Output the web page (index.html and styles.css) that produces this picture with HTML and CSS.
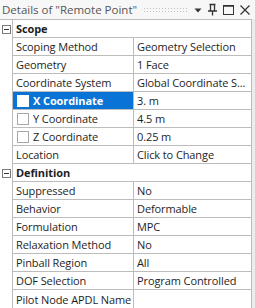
FILE: index.html
```html
<!DOCTYPE html>
<html>
<head>
<meta charset="utf-8">
<link rel="stylesheet" href="styles.css">
</head>
<body>
<div class="panel">
  <div class="titlebar">
    <span class="title">Details of "Remote Point"</span>
    <span class="grip"></span>
    <svg class="ic" width="10" height="12" viewBox="0 0 10 12"><path d="M1.5 4.5 L8.5 4.5 L5 8.5 Z" fill="#333"/></svg>
    <svg class="ic" width="11" height="13" viewBox="0 0 11 13"><path d="M2.5 1.5 H8.5 M3.5 1.5 V7.5 M7.5 1.5 V7.5 M1 8 H10 M5.5 8 V12.5" stroke="#333" stroke-width="1.3" fill="none"/></svg>
    <svg class="ic" width="13" height="13" viewBox="0 0 13 13"><rect x="1.5" y="2.5" width="10" height="9" stroke="#333" stroke-width="1" fill="none"/><path d="M1.5 3 H11.5" stroke="#333" stroke-width="1.5"/></svg>
    <svg class="ic" width="12" height="13" viewBox="0 0 12 13"><path d="M1.5 2.5 L10.5 11.5 M10.5 2.5 L1.5 11.5" stroke="#333" stroke-width="1.2"/></svg>
  </div>
  <div class="body">
    <div class="table">
      <div class="row section"><div class="gut"><span class="minus"></span></div><div class="hcell">Scope</div></div>
      <div class="row"><div class="gut"></div><div class="k">Scoping Method</div><div class="v">Geometry Selection</div></div>
      <div class="row"><div class="gut"></div><div class="k">Geometry</div><div class="v">1 Face</div></div>
      <div class="row"><div class="gut"></div><div class="k">Coordinate System</div><div class="v">Global Coordinate S...</div></div>
      <div class="row"><div class="gut"></div><div class="k sel"><span class="cb"></span>X Coordinate</div><div class="v">3. m</div></div>
      <div class="row"><div class="gut"></div><div class="k"><span class="cb"></span>Y Coordinate</div><div class="v">4.5 m</div></div>
      <div class="row"><div class="gut"></div><div class="k"><span class="cb"></span>Z Coordinate</div><div class="v">0.25 m</div></div>
      <div class="row"><div class="gut"></div><div class="k">Location</div><div class="v">Click to Change</div></div>
      <div class="row section"><div class="gut"><span class="minus"></span></div><div class="hcell">Definition</div></div>
      <div class="row"><div class="gut"></div><div class="k">Suppressed</div><div class="v">No</div></div>
      <div class="row"><div class="gut"></div><div class="k">Behavior</div><div class="v">Deformable</div></div>
      <div class="row"><div class="gut"></div><div class="k">Formulation</div><div class="v">MPC</div></div>
      <div class="row"><div class="gut"></div><div class="k">Relaxation Method</div><div class="v">No</div></div>
      <div class="row"><div class="gut"></div><div class="k">Pinball Region</div><div class="v">All</div></div>
      <div class="row"><div class="gut"></div><div class="k">DOF Selection</div><div class="v">Program Controlled</div></div>
      <div class="row"><div class="gut"></div><div class="k">Pilot Node APDL Name</div><div class="v"></div></div>
    </div>
    <div class="scroll"></div>
  </div>
</div>
</body>
</html>
```

FILE: styles.css
```css
* { box-sizing: border-box; }
html, body { margin: 0; padding: 0; background: #fff; }
body { font-family: "Open Sans", "Noto Sans", sans-serif; font-size: 11px; color: #1e1e1e; }
.panel { width: 255px; height: 308px; overflow: hidden; display: flex; flex-direction: column; }
.titlebar { height: 20px; display: flex; align-items: center; padding: 0 4px 0 2px; background: #f7f7f7; gap: 4px; }
.title { color: #555; font-size: 11.5px; white-space: nowrap; }
.grip { flex: 1; height: 5px; margin: 0 2px; background-image: radial-gradient(circle, #c0c0c0 0.6px, transparent 0.8px); background-size: 3px 3px; }
.ic { display: block; }
.body { flex: 1; display: flex; }
.table { width: 251px; border-top: 1px solid #bcbcbc; }
.scroll { flex: 1; background: #ececec; border-left: 1px solid #bcbcbc; }
.row { height: 18px; display: grid; grid-template-columns: 12px 121px 1fr; }
.gut { display: flex; align-items: center; justify-content: center; background: #fff; }
.k, .v, .hcell { border-left: 1px solid #bcbcbc; border-bottom: 1px solid #bcbcbc; padding-left: 3px; display: flex; align-items: center; white-space: nowrap; overflow: hidden; letter-spacing: -0.1px; }
.hcell { grid-column: 2 / 4; font-weight: 700; }
.k.sel { background: #0a74d6; color: #fff; font-weight: 700; }
.cb { width: 12px; height: 12px; border: 1px solid #a8a8a8; background: #fff; margin: 0 4px 0 1px; flex: none; }
.k.sel .cb { border-color: #fff; }
.minus { width: 9px; height: 9px; border: 1px solid #7a7a7a; position: relative; background: #fff; }
.minus::after { content: ""; position: absolute; left: 1px; right: 1px; top: 3px; height: 1px; background: #333; }
.row:last-child .k, .row:last-child .v { border-bottom: none; }
```
